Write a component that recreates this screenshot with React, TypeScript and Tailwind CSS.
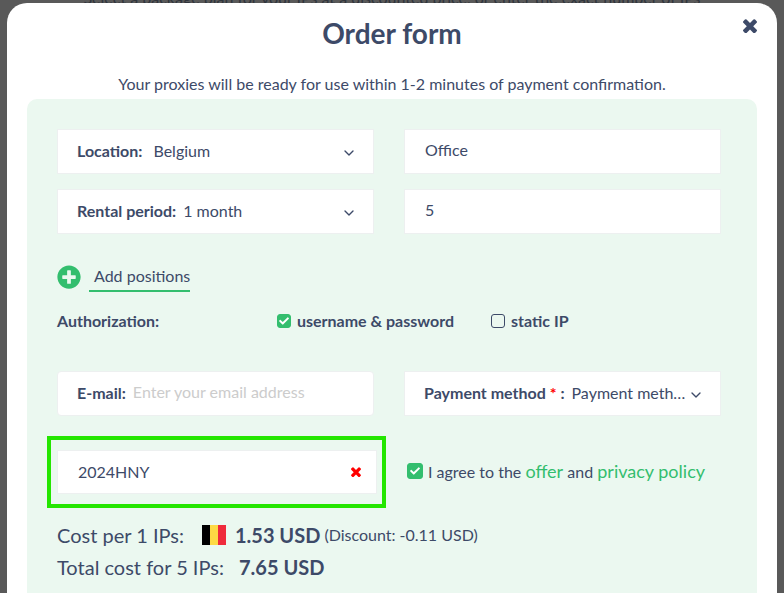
import React, { useState, type ReactNode } from "react";
import { FaPlusCircle, FaCheck } from "react-icons/fa";
import { FiChevronDown } from "react-icons/fi";

function TimesIcon({ className }: { className?: string }) {
  return (
    <svg viewBox="110 238 1188 1188" fill="currentColor" className={className} aria-hidden="true">
      <path d="M1298 1214q0 40-28 68l-136 136q-28 28-68 28t-68-28l-294-294-294 294q-28 28-68 28t-68-28l-136-136q-28-28-28-68t28-68l294-294-294-294q-28-28-28-68t28-68l136-136q28-28 68-28t68 28l294 294 294-294q28-28 68-28t68 28l136 136q28 28 28 68t-28 68l-294 294 294 294q28 28 28 68z" />
    </svg>
  );
}

function BelgiumFlag() {
  return (
    <svg viewBox="0 0 24 20" className="w-6 h-5" role="img" aria-label="Belgium">
      <rect width="8" height="20" fill="#000000" />
      <rect x="8" width="8" height="20" fill="#fdda44" />
      <rect x="16" width="8" height="20" fill="#ef2b3c" />
    </svg>
  );
}

interface SelectFieldProps {
  id: string;
  label: ReactNode;
  options: string[];
  labelClass: string;
}

function SelectField({ id, label, options, labelClass }: SelectFieldProps) {
  return (
    <div className="relative flex items-center h-[45px] pl-[19px] pr-5 pb-0.5 bg-white border border-[#edf0f0]">
      <label htmlFor={id} className={`shrink-0 font-bold ${labelClass}`}>
        {label}
      </label>
      <select
        id={id}
        className="flex-1 min-w-0 pr-2 appearance-none bg-transparent outline-none text-ellipsis overflow-hidden whitespace-nowrap"
      >
        {options.map((o) => (
          <option key={o}>{o}</option>
        ))}
      </select>
      <FiChevronDown className="absolute right-4 top-[15px] w-4 h-4 pointer-events-none" />
    </div>
  );
}

interface CheckProps {
  id: string;
  checked: boolean;
  sizeClass?: string;
  onChange: (v: boolean) => void;
}

function Check({ id, checked, sizeClass = "w-3.5 h-3.5", onChange }: CheckProps) {
  return (
    <span className="relative flex shrink-0">
      <input
        id={id}
        type="checkbox"
        checked={checked}
        onChange={(e) => onChange(e.target.checked)}
        className={`${sizeClass} appearance-none rounded-[3px] border border-[#3d4a68] checked:border-[#33be6e] checked:bg-[#33be6e]`}
      />
      {checked && (
        <FaCheck className="absolute inset-0 m-auto w-2.5 h-2.5 text-white pointer-events-none" />
      )}
    </span>
  );
}

export default function App() {
  const [auth, setAuth] = useState("password");
  const [agree, setAgree] = useState(true);
  const [coupon, setCoupon] = useState("2024HNY");

  return (
    <div className="min-h-screen flex flex-col bg-[#595959] font-['Lato',sans-serif] text-base text-[#3d4a68]">
      <div className="h-[3px] flex items-end justify-center overflow-hidden">
        <p className="leading-[10px] text-[#2f343c] whitespace-nowrap">
          Select a package plan for your IPs at a discounted price, or enter the exact number of IPs
        </p>
      </div>

      <main
        role="dialog"
        aria-labelledby="title"
        className="relative flex-1 flex flex-col mx-[7px] px-5 bg-white rounded-t-[20px]"
      >
        <button type="button" aria-label="Close" className="absolute top-4 right-5">
          <TimesIcon className="w-3.5 h-3.5" />
        </button>

        <h1 id="title" className="pt-3 text-[28px] leading-9 font-bold text-center">
          Order form
        </h1>
        <p className="mt-[21px] mb-[3px] leading-6 text-center">
          Your proxies will be ready for use within 1-2 minutes of payment confirmation.
        </p>

        <form className="flex-1 pt-[30px] pl-[30px] pr-9 bg-[#ebf8f0] rounded-t-[10px]">
          <div className="grid grid-cols-2 gap-x-[30px] gap-y-[15px]">
            <SelectField
              id="location"
              label="Location:"
              options={["Belgium"]}
              labelClass="mr-[11px]"
            />
            <input
              aria-label="Purpose"
              defaultValue="Office"
              className="min-w-0 h-[45px] px-5 pb-1 bg-white border border-[#edf0f0] outline-none"
            />
            <SelectField
              id="period"
              label="Rental period:"
              options={["1 month"]}
              labelClass="mr-[7px]"
            />
            <input
              aria-label="Quantity"
              defaultValue="5"
              className="min-w-0 h-[45px] px-5 pb-1 bg-white border border-[#edf0f0] outline-none"
            />
          </div>

          <button type="button" className="flex items-center gap-2 mt-7">
            <FaPlusCircle className="w-6 h-6 text-[#33be6e]" />
            <span className="pl-[5px] leading-7 border-b-2 border-[#33be6e]">Add positions</span>
          </button>

          <div className="flex items-center mt-[17px] leading-6 font-bold">
            <span className="w-[220px]">Authorization:</span>
            <div className="flex items-center gap-1.5 mr-[37px]">
              <Check
                id="auth-password"
                checked={auth === "password"}
                onChange={() => setAuth("password")}
              />
              <label htmlFor="auth-password">username &amp; password</label>
            </div>
            <div className="flex items-center gap-1.5">
              <Check id="auth-ip" checked={auth === "ip"} onChange={() => setAuth("ip")} />
              <label htmlFor="auth-ip">static IP</label>
            </div>
          </div>

          <div className="grid grid-cols-2 gap-x-[30px] mt-[38px]">
            <div className="flex items-center h-[45px] pl-[19px] pr-5 pb-0.5 bg-white border border-[#edf0f0] rounded">
              <label htmlFor="email" className="mr-[7px] font-bold">
                E-mail:
              </label>
              <input
                id="email"
                type="email"
                placeholder="Enter your email address"
                className="flex-1 min-w-0 pb-0.5 outline-none placeholder:text-[#cccccc]"
              />
            </div>
            <SelectField
              id="payment"
              label={
                <>
                  Payment method<span className="text-[#ff0000]"> *</span> :
                </>
              }
              options={["Payment method not selected"]}
              labelClass="mr-[7px]"
            />
          </div>

          <div className="grid grid-cols-2 gap-x-[30px] items-center mt-5">
            <div className="-ml-2.5 -mr-3 pl-1.5 pr-[5px] py-[10px] border-4 border-[#24e600]">
              <div className="flex items-center h-11 pl-5 pr-[15px] bg-white border border-[#edf0f0]">
                <input
                  aria-label="Promo code"
                  value={coupon}
                  onChange={(e) => setCoupon(e.target.value)}
                  className="flex-1 min-w-0 outline-none"
                />
                <button type="button" aria-label="Clear promo code" onClick={() => setCoupon("")}>
                  <TimesIcon className="w-2.5 h-2.5 text-[#ff0000]" />
                </button>
              </div>
            </div>
            <div className="flex items-center gap-[5px] pl-[3px] pb-0.5 whitespace-nowrap">
              <Check id="agree" checked={agree} sizeClass="w-4 h-4" onChange={setAgree} />
              <label htmlFor="agree">
                I agree to the{" "}
                <a href="#offer" className="text-lg text-[#33be6e]">
                  offer
                </a>{" "}
                and{" "}
                <a href="#privacy" className="text-lg text-[#33be6e]">
                  privacy policy
                </a>
              </label>
            </div>
          </div>

          <div className="mt-[11px] text-xl leading-8">
            <p className="flex items-center">
              Cost per 1 IPs:
              <span className="ml-[18px] mr-[9px]">
                <BelgiumFlag />
              </span>
              <strong>1.53 USD</strong>
              <span className="ml-1 text-base leading-8">(Discount: -0.11 USD)</span>
            </p>
            <p>
              Total cost for 5 IPs: <strong className="ml-2.5">7.65 USD</strong>
            </p>
          </div>
        </form>
      </main>
    </div>
  );
}
